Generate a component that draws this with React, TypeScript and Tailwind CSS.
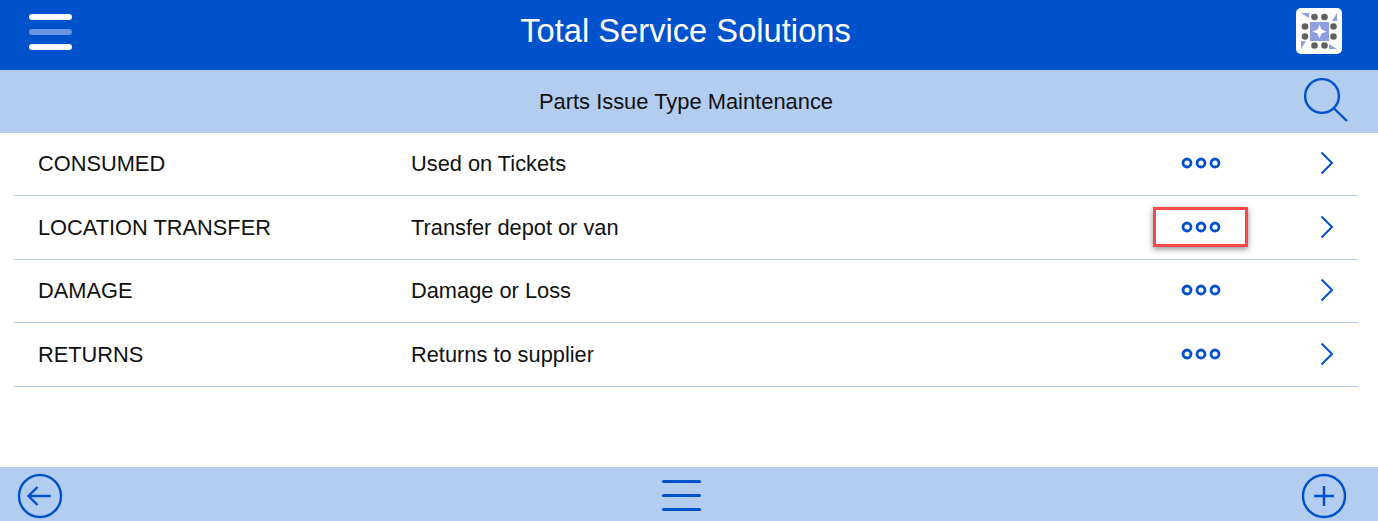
import React from 'react';

const rows = [
  { code: 'CONSUMED', description: 'Used on Tickets', height: 'h-[63px]', textOffset: 'pb-[2px]' },
  { code: 'LOCATION TRANSFER', description: 'Transfer depot or van', height: 'h-[64px]', textOffset: '', highlighted: true },
  { code: 'DAMAGE', description: 'Damage or Loss', height: 'h-[63px]', textOffset: 'pb-[2px]' },
  { code: 'RETURNS', description: 'Returns to supplier', height: 'h-[64px]', textOffset: '' },
];

const Logo = () => (
  <svg width="46" height="46" viewBox="0 0 46 46">
    <rect width="46" height="46" rx="5" fill="#fff" />
    <rect x="14" y="14" width="19" height="19" fill="#8e9ede" />
    <path d="M23.5 16.5 L25.5 21.5 L30.5 23.5 L25.5 25.5 L23.5 30.5 L21.5 25.5 L16.5 23.5 L21.5 21.5 Z" fill="#fff" />
    {[18.5, 28.5].map((c) => (
      <React.Fragment key={c}>
        <circle cx={c} cy="9" r="3.3" fill="#606060" />
        <circle cx={c} cy="37.5" r="3.3" fill="#606060" />
        <circle cx="9" cy={c} r="3.3" fill="#606060" />
        <circle cx="37.5" cy={c} r="3.3" fill="#606060" />
      </React.Fragment>
    ))}
    <path d="M5 5 L13 5 L13 10 Z M41 5 L41 13 L36 13 Z M5 41 L5 33 L10 33 Z M41 41 L33 41 L33 36 Z" fill="#8e9ede" />
  </svg>
);

const Dots = () => (
  <svg width="40" height="12" viewBox="0 0 40 12" fill="none" stroke="#0052cc" strokeWidth="2.8">
    <circle cx="6" cy="6" r="4" />
    <circle cx="20" cy="6" r="4" />
    <circle cx="34" cy="6" r="4" />
  </svg>
);

const Chevron = () => (
  <svg width="14" height="24" viewBox="0 0 14 24" fill="none" stroke="#0052cc" strokeWidth="2">
    <path d="M1.5 1.5 L12 12 L1.5 22.5" />
  </svg>
);

export default function App() {
  return (
    <div className="flex h-[521px] w-[1378px] flex-col overflow-hidden bg-white font-['Liberation_Sans',Arial,sans-serif] text-[#111]">
      {/* Top bar */}
      <header className="flex h-[70px] shrink-0 items-center justify-between bg-[#0052cc] pb-[6px] pl-[29px] pr-[36px]">
        <div className="flex w-[43px] flex-col gap-[9px]">
          <span className="h-[6px] rounded-full bg-white" />
          <span className="h-[6px] rounded-full bg-[#6b97e0]" />
          <span className="h-[6px] rounded-full bg-white" />
        </div>
        <h1 className="mb-[2px] ml-[3px] text-[32.7px] text-white">Total Service Solutions</h1>
        <div className="mb-[2px]">
          <Logo />
        </div>
      </header>

      {/* Sub header */}
      <div className="flex h-[63px] shrink-0 items-center justify-between bg-[#b3cdf1] pl-[69px] pr-[29px]">
        <h2 className="flex-1 pt-[2px] text-center text-[21.9px]">Parts Issue Type Maintenance</h2>
        <svg className="mb-[2px] overflow-visible" width="46" height="46" viewBox="0 0 46 46" fill="none" stroke="#0052cc" strokeWidth="2.4">
          <circle cx="19" cy="18" r="16.9" />
          <path d="M31 30.5 L44 43" />
        </svg>
      </div>

      {/* List */}
      <div className="flex-1 pl-[14px] pr-[20px]">
        {rows.map((row) => (
          <div key={row.code} className={`flex items-center border-b border-[#b3cdf1] text-[21.8px] leading-[33px] ${row.height}`}>
            <div className={`w-[373px] pl-[24px] ${row.textOffset}`}>{row.code}</div>
            <div className={`flex-1 pl-[24px] ${row.textOffset}`}>{row.description}</div>
            <div className="flex w-[330px] items-center pb-[2px]">
              <div className="flex w-[220px] justify-end">
                <div className={`flex h-[40px] w-[95px] items-center justify-center ${row.highlighted ? 'border-[3px] border-[#f84848] shadow-[0_2px_6px_rgba(0,0,0,0.45)]' : ''}`}>
                  <Dots />
                </div>
              </div>
              <div className="ml-[72px] flex">
                <Chevron />
              </div>
            </div>
          </div>
        ))}
      </div>

      {/* Footer */}
      <footer className="flex h-[54px] shrink-0 items-center justify-between bg-[#b3cdf1] pl-[17px] pr-[31px] pt-[4px]">
        <svg width="46" height="46" viewBox="0 0 46 46" fill="none" stroke="#0052cc" strokeWidth="2.4">
          <circle cx="23" cy="23" r="21" />
          <path d="M33.7 23 H11.5 M20.5 14 L11.5 23 L20.5 32" />
        </svg>
        <div className="mb-[2px] mr-[1px] flex w-[39px] flex-col gap-[11px]">
          <span className="h-[3px] rounded-full bg-[#0052cc]" />
          <span className="h-[3px] rounded-full bg-[#0052cc]" />
          <span className="h-[3px] rounded-full bg-[#0052cc]" />
        </div>
        <svg width="46" height="46" viewBox="0 0 46 46" fill="none" stroke="#0052cc" strokeWidth="2.4">
          <circle cx="23" cy="23" r="21" />
          <path d="M23 13 V33 M13 23 H33" />
        </svg>
      </footer>
    </div>
  );
}
